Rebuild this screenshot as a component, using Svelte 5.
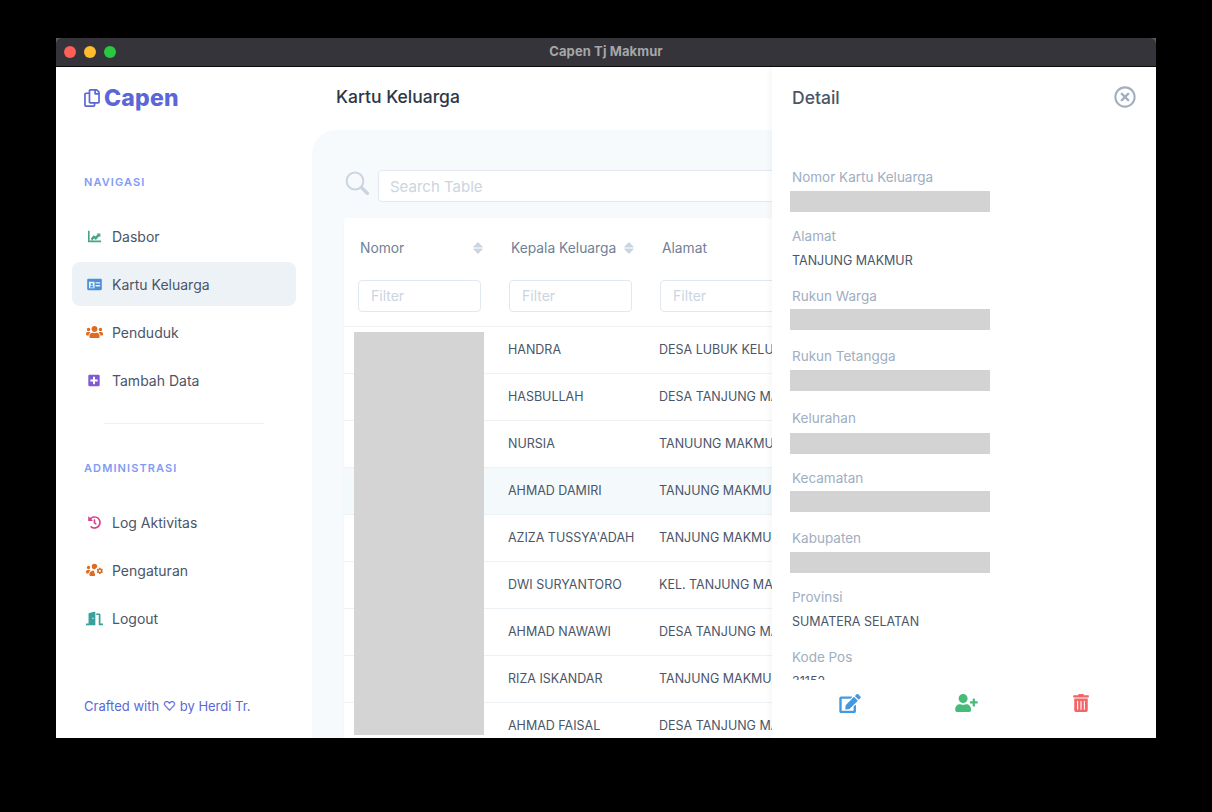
<script>
  const icons = {
    chart: { box: '0 0 512 512', d: 'M0 32h64v384h448v64H0zM112 330l112-128 72 56 84-94-44-28h150v150l-46-44-132 148-72-56-76 88z' },
    id: { box: '0 0 576 512', d: 'M528 32H48C21.5 32 0 53.5 0 80v352c0 26.5 21.5 48 48 48h480c26.5 0 48-21.5 48-48V80c0-26.5-21.5-48-48-48zM70 150h220v250H70zm260 20h180v50H330zm0 110h180v50H330zM110 370c0-40 30-58 70-58s70 18 70 58zm70-72a46 46 0 1 1 0-92 46 46 0 0 1 0 92z' },
    users: { box: '0 0 640 512', d: 'M96 224c35.3 0 64-28.7 64-64s-28.7-64-64-64-64 28.7-64 64 28.7 64 64 64zm448 0c35.3 0 64-28.7 64-64s-28.7-64-64-64-64 28.7-64 64 28.7 64 64 64zm32 32h-64c-17.6 0-33.5 7.1-45.1 18.6 40.3 22.1 68.9 62 75.1 109.4h66c17.7 0 32-14.3 32-32v-32c0-35.3-28.7-64-64-64zm-256 0c61.9 0 112-50.1 112-112S381.9 32 320 32 208 82.1 208 144s50.1 112 112 112zm76.8 32h-8.3c-20.8 10-43.9 16-68.5 16s-47.6-6-68.5-16h-8.3C179.6 288 128 339.6 128 403.2V432c0 26.5 21.5 48 48 48h288c26.5 0 48-21.5 48-48v-28.8c0-63.6-51.6-115.2-115.2-115.2zm-223.7-13.4C161.5 263.1 145.6 256 128 256H64c-35.3 0-64 28.7-64 64v32c0 17.7 14.3 32 32 32h65.9c6.3-47.4 34.9-87.3 75.2-109.4z' },
    plus: { box: '0 0 448 512', d: 'M400 32H48C21.5 32 0 53.5 0 80v352c0 26.5 21.5 48 48 48h352c26.5 0 48-21.5 48-48V80c0-26.5-21.5-48-48-48zm-32 252c0 6.6-5.4 12-12 12h-92v92c0 6.6-5.4 12-12 12h-56c-6.6 0-12-5.4-12-12v-92H92c-6.6 0-12-5.4-12-12v-56c0-6.6 5.4-12 12-12h92v-92c0-6.6 5.4-12 12-12h56c6.6 0 12 5.4 12 12v92h92c6.6 0 12 5.4 12 12z' },
    history: { box: '0 0 512 512', d: 'M504 255.531c.253 136.64-111.18 248.372-247.82 248.468-59.015.042-113.223-20.53-155.822-54.911-11.077-8.94-11.905-25.541-1.839-35.607l11.267-11.267c8.609-8.609 22.353-9.551 31.891-1.984C173.062 425.135 212.781 440 256 440c101.705 0 184-82.311 184-184 0-101.705-82.311-184-184-184-48.814 0-93.149 18.969-126.068 49.932l50.754 50.754c10.08 10.08 2.941 27.314-11.313 27.314H24c-8.837 0-16-7.163-16-16V38.627c0-14.254 17.234-21.393 27.314-11.314l49.372 49.372C129.209 34.136 189.552 8 256 8c136.81 0 247.747 110.78 248 247.531zm-180.912 78.784l9.823-12.63c8.138-10.463 6.253-25.542-4.21-33.679L288 256.349V152c0-13.255-10.745-24-24-24h-16c-13.255 0-24 10.745-24 24v135.651l65.409 50.874c10.463 8.137 25.541 6.253 33.679-4.21z' },
    cog: { box: '0 0 640 512', d: 'M96 224a64 64 0 1 0 0-128 64 64 0 0 0 0 128zM320 20a104 104 0 0 0-104 104 104 104 0 0 0 104 104c12 0 24-3 34-7a130 130 0 0 1 66-66 104 104 0 0 0-100-135zM64 256h64c18 0 33 7 45 19-40 22-69 62-75 109H32c-18 0-32-14-32-32v-32c0-35 29-64 64-64zm138 44c30-17 66-20 106-12-6 40 4 86 34 122-10 24-12 46-6 70H176c-26 0-48-22-48-48v-29c0-42 30-85 74-103zM640 320l-30-17c2-11 2-20 0-31l30-17-32-55-30 17c-8-7-16-12-26-15v-34h-64v34c-10 3-18 8-26 15l-30-17-32 55 30 17c-2 11-2 20 0 31l-30 17 32 55 30-17c8 7 16 12 26 15v34h64v-34c10-3 18-8 26-15l30 17zM520 328a40 40 0 1 1 0-80 40 40 0 0 1 0 80z' },
    door: { box: '0 0 640 512', d: 'M624 448h-80V113c0-27-21-49-48-49H384v64h96v384h144c9 0 16-7 16-16v-32c0-9-7-16-16-16zM312 1L120 50c-14 4-24 17-24 31v367H16c-9 0-16 7-16 16v32c0 9 7 16 16 16h336V32c0-21-20-36-40-31zm-48 279c-13 0-24-14-24-32s11-32 24-32 24 14 24 32-11 32-24 32z' },
    edit: { box: '0 0 576 512', d: 'M402.6 83.2l90.2 90.2c3.8 3.8 3.8 10 0 13.8L274.4 405.6l-92.8 10.3c-12.4 1.4-22.9-9.1-21.5-21.5l10.3-92.8L388.8 83.2c3.8-3.8 10-3.8 13.8 0zm162-22.9l-48.8-48.8c-15.2-15.2-39.9-15.2-55.2 0l-35.4 35.4c-3.8 3.8-3.8 10 0 13.8l90.2 90.2c3.8 3.8 10 3.8 13.8 0l35.4-35.4c15.2-15.3 15.2-40 0-55.2zM384 346.2V448H64V128h229.8c3.2 0 6.2-1.3 8.5-3.5l40-40c7.6-7.6 2.2-20.5-8.5-20.5H48C21.5 64 0 85.5 0 112v352c0 26.5 21.5 48 48 48h352c26.5 0 48-21.5 48-48V306.2c0-10.7-12.9-16-20.5-8.5l-40 40c-2.2 2.3-3.5 5.3-3.5 8.5z' },
    userPlus: { box: '0 0 640 512', d: 'M624 208h-64v-64c0-8.8-7.2-16-16-16h-32c-8.8 0-16 7.2-16 16v64h-64c-8.8 0-16 7.2-16 16v32c0 8.8 7.2 16 16 16h64v64c0 8.8 7.2 16 16 16h32c8.8 0 16-7.2 16-16v-64h64c8.8 0 16-7.2 16-16v-32c0-8.8-7.2-16-16-16zm-400 48c70.7 0 128-57.3 128-128S294.7 0 224 0 96 57.3 96 128s57.3 128 128 128zm89.6 32h-16.7c-22.2 10.2-46.9 16-72.9 16s-50.6-5.8-72.9-16h-16.7C60.2 288 0 348.2 0 422.4V464c0 26.5 21.5 48 48 48h352c26.5 0 48-21.5 48-48v-41.6c0-74.2-60.2-134.4-134.4-134.4z' },
    trash: { box: '0 0 448 512', d: 'M32 464a48 48 0 0 0 48 48h288a48 48 0 0 0 48-48V128H32zm272-256a16 16 0 0 1 32 0v224a16 16 0 0 1-32 0zm-96 0a16 16 0 0 1 32 0v224a16 16 0 0 1-32 0zm-96 0a16 16 0 0 1 32 0v224a16 16 0 0 1-32 0zM432 32H312l-9.4-18.7A24 24 0 0 0 281.1 0H166.8a23.72 23.72 0 0 0-21.4 13.3L136 32H16A16 16 0 0 0 0 48v32a16 16 0 0 0 16 16h416a16 16 0 0 0 16-16V48a16 16 0 0 0-16-16z' },
    close: { box: '0 0 512 512', d: 'M256 8C119 8 8 119 8 256s111 248 248 248 248-111 248-248S393 8 256 8zm0 448c-110.5 0-200-89.5-200-200S145.5 56 256 56s200 89.5 200 200-89.5 200-200 200zm101.8-262.2L295.6 256l62.2 62.2c4.7 4.7 4.7 12.3 0 17l-22.6 22.6c-4.7 4.7-12.3 4.7-17 0L256 295.6l-62.2 62.2c-4.7 4.7-12.3 4.7-17 0l-22.6-22.6c-4.7-4.7-4.7-12.3 0-17l62.2-62.2-62.2-62.2c-4.7-4.7-4.7-12.3 0-17l22.6-22.6c4.7-4.7 12.3-4.7 17 0l62.2 62.2 62.2-62.2c4.7-4.7 12.3-4.7 17 0l22.6 22.6c4.7 4.7 4.7 12.3 0 17z' },
    copy: { box: '0 0 448 512', d: 'M433.941 65.941l-51.882-51.882A48 48 0 0 0 348.118 0H176c-26.51 0-48 21.49-48 48v48H48c-26.51 0-48 21.49-48 48v320c0 26.51 21.49 48 48 48h224c26.51 0 48-21.49 48-48v-48h80c26.51 0 48-21.49 48-48V99.882a48 48 0 0 0-14.059-33.941zM266 464H54a6 6 0 0 1-6-6V150a6 6 0 0 1 6-6h74v224c0 26.51 21.49 48 48 48h96v42a6 6 0 0 1-6 6zm128-96H182a6 6 0 0 1-6-6V54a6 6 0 0 1 6-6h106v88c0 13.255 10.745 24 24 24h88v202a6 6 0 0 1-6 6zm6-256h-64V48h9.632c1.591 0 3.117.632 4.243 1.757l48.368 48.368a6 6 0 0 1 1.757 4.243V112z' }
  };

  const nav = [
    { label: 'Dasbor', icon: 'chart', color: '#48a57f', w: 13, h: 13 },
    { label: 'Kartu Keluarga', icon: 'id', color: '#4a90d9', w: 15, h: 13, active: true },
    { label: 'Penduduk', icon: 'users', color: '#dd6b20', w: 17, h: 14 },
    { label: 'Tambah Data', icon: 'plus', color: '#805ad5', w: 12, h: 13 }
  ];
  const admin = [
    { label: 'Log Aktivitas', icon: 'history', color: '#d53f8c', w: 13, h: 13 },
    { label: 'Pengaturan', icon: 'cog', color: '#dd6b20', w: 17, h: 14 },
    { label: 'Logout', icon: 'door', color: '#38a09d', w: 17, h: 15 }
  ];
  const rows = [
    ['HANDRA', 'DESA LUBUK KELUMPANG'],
    ['HASBULLAH', 'DESA TANJUNG MAKMUR'],
    ['NURSIA', 'TANUUNG MAKMUR'],
    ['AHMAD DAMIRI', 'TANJUNG MAKMUR'],
    ["AZIZA TUSSYA'ADAH", 'TANJUNG MAKMUR'],
    ['DWI SURYANTORO', 'KEL. TANJUNG MAKMUR'],
    ['AHMAD NAWAWI', 'DESA TANJUNG MAKMUR'],
    ['RIZA ISKANDAR', 'TANJUNG MAKMUR'],
    ['AHMAD FAISAL', 'DESA TANJUNG MAKMUR']
  ];
  const fields = [
    { label: 'Nomor Kartu Keluarga', gap: 4, pitch: 59 },
    { label: 'Alamat', value: 'TANJUNG MAKMUR', gap: 4, pitch: 60 },
    { label: 'Rukun Warga', gap: 3, pitch: 60 },
    { label: 'Rukun Tetangga', gap: 4, pitch: 62 },
    { label: 'Kelurahan', gap: 5, pitch: 60 },
    { label: 'Kecamatan', gap: 3, pitch: 60 },
    { label: 'Kabupaten', gap: 4, pitch: 59 },
    { label: 'Provinsi', value: 'SUMATERA SELATAN', gap: 4, pitch: 60 },
    { label: 'Kode Pos', value: '31152', gap: 4, pitch: 60 }
  ];
</script>

{#snippet icon(name, w, h, color)}
  <svg class="ico" width={w} height={h} viewBox={icons[name].box} fill={color} aria-hidden="true">
    <path d={icons[name].d} />
  </svg>
{/snippet}

{#snippet navItem(item)}
  <a class="nav-item" class:active={item.active} href="#/">
    <span class="nav-icon">{@render icon(item.icon, item.w, item.h, item.color)}</span>
    <span>{item.label}</span>
  </a>
{/snippet}

{#snippet sort()}
  <svg class="sort" width="10" height="14" viewBox="0 0 10 14" fill="#cbd5e0" aria-hidden="true">
    <path d="M5 1l4.6 4.8c.2.3 0 .7-.4.7H.8c-.4 0-.6-.4-.4-.7zM5 13L.4 8.2c-.2-.3 0-.7.4-.7h8.4c.4 0 .6.4.4.7z" />
  </svg>
{/snippet}

<div class="window">
  <header class="titlebar">
    <div class="lights"><i class="red"></i><i class="yellow"></i><i class="green"></i></div>
    <span class="title">Capen Tj Makmur</span>
  </header>

  <div class="app">
    <aside class="sidebar">
      <div class="logo">
        {@render icon('copy', 16, 18, '#5a67d8')}
        <span>Capen</span>
      </div>

      <h6 class="group first">NAVIGASI</h6>
      <nav class="nav">
        {#each nav as item}{@render navItem(item)}{/each}
      </nav>
      <hr class="divider" />
      <h6 class="group">ADMINISTRASI</h6>
      <nav class="nav">
        {#each admin as item}{@render navItem(item)}{/each}
      </nav>

      <p class="credit">Crafted with ♡ by Herdi Tr.</p>
    </aside>

    <main class="main">
      <div class="page-head"><h1>Kartu Keluarga</h1></div>
      <section class="panel">
        <div class="search">
          <svg width="24" height="24" viewBox="0 0 24 24" fill="none" stroke="#cbd5e0" aria-hidden="true">
            <circle cx="10" cy="10" r="8.4" stroke-width="2" />
            <path d="M16.5 16.5l6 6" stroke-width="3.4" stroke-linecap="round" />
          </svg>
          <input class="field search-input" placeholder="Search Table" />
        </div>

        <div class="table-card">
          <table>
            <colgroup><col class="c" /><col class="c" /><col /></colgroup>
            <thead>
              <tr>
                <th><div class="th"><span>Nomor</span>{@render sort()}</div><input class="field filter" placeholder="Filter" /></th>
                <th><div class="th"><span>Kepala Keluarga</span>{@render sort()}</div><input class="field filter" placeholder="Filter" /></th>
                <th><div class="th"><span>Alamat</span></div><input class="field filter" placeholder="Filter" /></th>
              </tr>
            </thead>
            <tbody>
              {#each rows as row, i}
                <tr class:hover={i === 3}>
                  <td></td>
                  <td>{row[0]}</td>
                  <td>{row[1]}</td>
                </tr>
              {/each}
            </tbody>
          </table>
          <div class="redact-col"></div>
        </div>
      </section>
    </main>

    <aside class="detail">
      <div class="detail-head">
        <h2>Detail</h2>
        {@render icon('close', 22, 22, '#a0aec0')}
      </div>
      <div class="detail-body">
        {#each fields as f}
          <div class="detail-field" style:height="{f.pitch}px">
            <div class="label" style:margin-bottom="{f.gap}px">{f.label}</div>
            {#if f.value}
              <div class="value">{f.value}</div>
            {:else}
              <div class="redact"></div>
            {/if}
          </div>
        {/each}
      </div>
      <div class="detail-foot">
        {@render icon('edit', 22, 19, '#4299e1')}
        {@render icon('userPlus', 23, 18, '#48bb78')}
        {@render icon('trash', 16, 18, '#f56565')}
      </div>
    </aside>
  </div>
</div>

<style>
  :global(body) {
    margin: 0;
    background: #000;
    font-family: Inter, "Open Sans", sans-serif;
  }
  .window {
    position: relative;
    width: 1100px;
    height: 700px;
    margin: 38px 56px;
    display: flex;
    flex-direction: column;
    overflow: hidden;
    background: #5c5c5e;
  }
  .titlebar {
    position: relative;
    flex: 0 0 29px;
    box-sizing: border-box;
    display: flex;
    align-items: center;
    justify-content: center;
    padding-bottom: 2px;
    background: #35343a;
    border-bottom: 1px solid #0c0c0c;
    border-radius: 6px 6px 0 0;
  }
  .lights {
    position: absolute;
    left: 8px;
    top: 8px;
    display: flex;
    gap: 8px;
  }
  .lights i {
    width: 12px;
    height: 12px;
    border-radius: 50%;
  }
  .red { background: #fe5f57; }
  .yellow { background: #febc2e; }
  .green { background: #28c840; }
  .title {
    font-size: 13px;
    font-weight: 700;
    color: #a6a6a9;
    letter-spacing: 0.1px;
  }
  .app {
    position: relative;
    flex: 1;
    display: flex;
    min-height: 0;
    background: #fff;
  }
  .ico { display: block; flex: none; }
  .sidebar {
    flex: 0 0 256px;
    box-sizing: border-box;
    display: flex;
    flex-direction: column;
    padding: 16px 16px 22px 16px;
    color: #4a5568;
  }
  .logo {
    display: flex;
    align-items: center;
    gap: 4px;
    height: 30px;
    padding-left: 12px;
    font-size: 23px;
    font-weight: 800;
    color: #5a67d8;
    letter-spacing: 0.2px;
  }
  .group {
    margin: 0 0 25px 12px;
    font-size: 11px;
    line-height: 14px;
    font-weight: 600;
    letter-spacing: 1.1px;
    color: #7f9cf5;
  }
  .group.first { margin-top: 62px; }
  .nav {
    display: flex;
    flex-direction: column;
    gap: 4px;
  }
  .nav-item {
    display: flex;
    align-items: center;
    height: 44px;
    padding-left: 12px;
    border-radius: 8px;
    font-size: 14px;
    color: #4a5568;
    text-decoration: none;
  }
  .nav-item.active { background: #edf2f7; }
  .nav-icon {
    width: 20px;
    margin-right: 8px;
    display: flex;
    justify-content: center;
  }
  .divider {
    width: 160px;
    margin: 21px 0 37px 32px;
    border: 0;
    border-top: 1px solid #edf2f7;
  }
  .credit {
    margin: auto 0 0 12px;
    font-size: 13px;
    line-height: 20px;
    color: #5a67d8;
  }
  .main {
    flex: 1;
    min-width: 0;
    display: flex;
    flex-direction: column;
  }
  .page-head {
    flex: 0 0 63px;
    box-sizing: border-box;
    padding: 18px 24px 0;
  }
  .page-head h1 {
    margin: 0;
    font-size: 17.5px;
    line-height: 24px;
    font-weight: 500;
    color: #2d3748;
  }
  .panel {
    flex: 1;
    min-height: 0;
    box-sizing: border-box;
    padding: 40px 32px 0;
    background: #f7fafc;
    border-top-left-radius: 24px;
    overflow: hidden;
  }
  .search {
    display: flex;
    align-items: center;
    gap: 9px;
    height: 32px;
    margin-bottom: 16px;
  }
  .search svg { margin: -6px 0 0 1px; flex: none; }
  .field {
    box-sizing: border-box;
    height: 32px;
    padding: 0 12px;
    background: #fff;
    border: 1px solid #e2e8f0;
    border-radius: 4px;
    font: inherit;
    font-size: 14px;
    outline: none;
  }
  .field::placeholder { color: #cbd5e0; opacity: 1; }
  .search-input { flex: 1; font-size: 15px; padding-left: 11px; }
  .table-card {
    position: relative;
    background: #fff;
    border-radius: 4px 4px 0 0;
    box-shadow: 0 1px 3px rgba(0, 0, 0, 0.03);
  }
  table {
    width: 100%;
    table-layout: fixed;
    border-collapse: collapse;
  }
  col.c { width: 151px; }
  th {
    height: 108px;
    box-sizing: border-box;
    padding: 0 14px 14px;
    text-align: left;
    font-weight: 400;
    vertical-align: bottom;
    border-bottom: 1px solid #edf2f7;
  }
  .th {
    display: flex;
    align-items: center;
    justify-content: space-between;
    height: 20px;
    margin: 0 -2px 22px 2px;
    font-size: 13.8px;
    color: #718096;
  }
  .filter {
    display: block;
    width: 123px;
  }
  td {
    height: 47px;
    box-sizing: border-box;
    padding: 0 0 0 13px;
    font-size: 12.5px;
    color: #4a5568;
    border-bottom: 1px solid #edf2f7;
    white-space: nowrap;
    overflow: hidden;
  }
  tr.hover td { background: #f4f9fc; }
  .redact-col {
    position: absolute;
    left: 10px;
    top: 114px;
    width: 130px;
    height: 403px;
    background: #d4d4d4;
  }
  .detail {
    position: absolute;
    right: 0;
    top: 0;
    bottom: 0;
    width: 384px;
    display: flex;
    flex-direction: column;
    background: #fff;
    box-shadow: -2px 0 6px rgba(0, 0, 0, 0.04);
  }
  .detail-head {
    flex: 0 0 100px;
    box-sizing: border-box;
    display: flex;
    justify-content: space-between;
    padding: 19px 20px 0;
    color: #4a5568;
  }
  .detail-head h2 {
    margin: 0;
    font-size: 17.5px;
    line-height: 24px;
    font-weight: 500;
  }
  .detail-body {
    flex: 1;
    min-height: 0;
    overflow: hidden;
    padding-left: 20px;
  }
  .label {
    height: 20px;
    line-height: 20px;
    font-size: 13.5px;
    color: #a0aec0;
  }
  .value {
    line-height: 21px;
    font-size: 12.5px;
    color: #4a5568;
  }
  .redact {
    width: 200px;
    height: 21px;
    margin-left: -2px;
    background: #d3d3d3;
  }
  .detail-foot {
    flex: 0 0 58px;
    box-sizing: border-box;
    display: flex;
    justify-content: space-around;
    align-items: flex-start;
    padding: 14px 20px 0;
    background: #fff;
  }
</style>
